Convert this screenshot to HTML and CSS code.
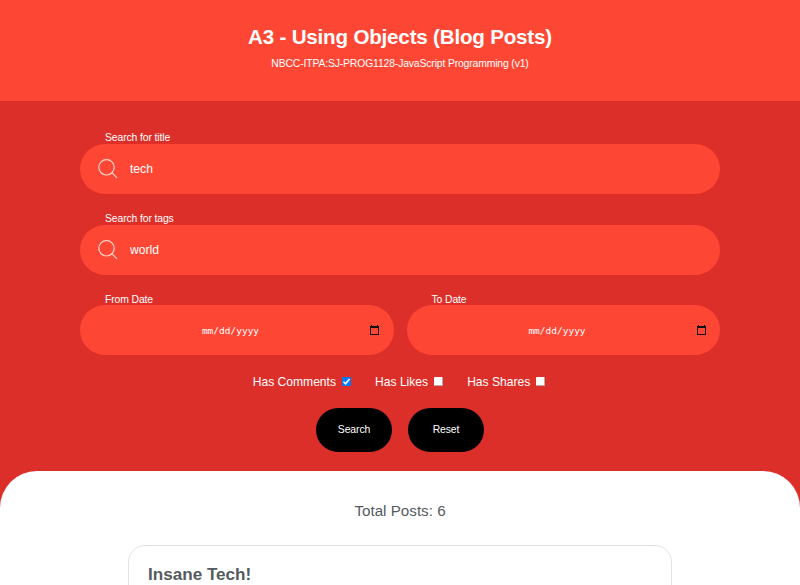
FILE: index.html
```html
<!DOCTYPE html>
<html lang="en">
<head>
<meta charset="utf-8">
<title>A3 - Using Objects (Blog Posts)</title>
<link rel="stylesheet" href="styles.css">
</head>
<body>
<header class="header">
  <h1>A3 - Using Objects (Blog Posts)</h1>
  <p>NBCC-ITPA:SJ-PROG1128-JavaScript Programming (v1)</p>
</header>
<form class="search">
  <div class="field">
    <label for="title">Search for title</label>
    <div class="pill">
      <svg class="glass" viewBox="0 0 20 20"><circle cx="8.5" cy="8.3" r="7.7"/><path d="M13.9 13.7 19 18.8"/></svg>
      <input id="title" type="text" value="tech">
    </div>
  </div>
  <div class="field">
    <label for="tags">Search for tags</label>
    <div class="pill">
      <svg class="glass" viewBox="0 0 20 20"><circle cx="8.5" cy="8.3" r="7.7"/><path d="M13.9 13.7 19 18.8"/></svg>
      <input id="tags" type="text" value="world">
    </div>
  </div>
  <div class="dates">
    <div class="field">
      <label>From Date</label>
      <div class="pill date"><span>mm/dd/yyyy</span>
        <svg class="calendar" viewBox="0 0 9 10"><path fill-rule="evenodd" d="M0 1H1V0H2V1H7V0H8V1H9V10H0ZM1 3V9H8V3Z"/></svg>
      </div>
    </div>
    <div class="field">
      <label>To Date</label>
      <div class="pill date"><span>mm/dd/yyyy</span>
        <svg class="calendar" viewBox="0 0 9 10"><path fill-rule="evenodd" d="M0 1H1V0H2V1H7V0H8V1H9V10H0ZM1 3V9H8V3Z"/></svg>
      </div>
    </div>
  </div>
  <div class="checks">
    <label>Has Comments <span class="box checked"><svg viewBox="0 0 9 9"><path d="M1.5 4.8 3.6 6.8 7.5 2"/></svg></span></label>
    <label>Has Likes <span class="box"></span></label>
    <label>Has Shares <span class="box"></span></label>
  </div>
  <div class="buttons">
    <button type="button">Search</button>
    <button type="button">Reset</button>
  </div>
</form>
<main class="results">
  <p class="total">Total Posts: 6</p>
  <article class="post"><h2>Insane Tech!</h2></article>
</main>
</body>
</html>
```
FILE: styles.css
```css
* { box-sizing: border-box; }
html, body { height: 100%; }
body {
  margin: 0;
  overflow: hidden;
  display: flex;
  flex-direction: column;
  background: #dc2f2a;
  color: #fff;
  font-family: "Liberation Sans", Arial, sans-serif;
}
h1, h2, p { margin: 0; }
.header {
  flex: none;
  height: 101px;
  padding-top: 24px;
  background: #fd4734;
  text-align: center;
}
.header h1 { font-size: 20.6px; line-height: 26px; letter-spacing: -0.2px; }
.header p { margin-top: 7px; font-size: 10.4px; line-height: 14px; letter-spacing: -0.15px; }
.search { flex: none; width: 640px; height: 370px; margin: 0 auto; padding-top: 30px; }
.field { height: 80.5px; }
.field > label {
  display: block;
  height: 13px;
  padding-left: 25px;
  font-size: 10.4px;
  line-height: 14px;
  letter-spacing: -0.12px;
}
.dates .field > label { line-height: 15px; }
.pill {
  display: flex;
  align-items: center;
  height: 50.4px;
  border-radius: 25.2px;
  background: #fd4734;
}
.glass {
  flex: none;
  width: 20px;
  height: 20px;
  margin: 0 12px 0 18px;
  fill: none;
  stroke: #ffd5cf;
  stroke-width: 1.2;
}
.pill input {
  flex: 1;
  min-width: 0;
  padding: 0;
  border: 0;
  outline: 0;
  background: transparent;
  color: #fff;
  font: 12.1px "Liberation Sans", Arial, sans-serif;
}
.dates { display: grid; grid-template-columns: 1fr 1fr; gap: 13px; }
.date { padding: 0 14.5px 0 0; }
.date span {
  flex: 1;
  padding-left: 11px;
  font: 9.5px "DejaVu Sans Mono", monospace;
  text-align: center;
}
.calendar { width: 9px; height: 10px; margin-top: -1px; fill: #111; }
.checks {
  display: flex;
  justify-content: center;
  gap: 24px;
  height: 18px;
  padding-right: 2px;
  font-size: 12.1px;
  line-height: 18px;
}
.checks label { display: flex; align-items: center; gap: 6px; }
.box { width: 9px; height: 9px; border: 1px solid #b9aaa9; border-width: 0 1px 1px 0; border-radius: 1px; background: #fff; }
.checked { border: 0; background: #0878f8; }
.checked svg { display: block; width: 9px; height: 9px; fill: none; stroke: #fff; stroke-width: 1.5; }
.buttons { display: flex; justify-content: center; gap: 16px; margin-top: 17px; }
button {
  width: 76px;
  height: 44px;
  padding: 0;
  border: 0;
  border-radius: 22px;
  background: #000;
  color: #fff;
  font: 10.4px "Liberation Sans", Arial, sans-serif;
  letter-spacing: -0.1px;
}
.results {
  flex: 1;
  min-height: 0;
  overflow: hidden;
  padding-top: 30px;
  border-radius: 37px 37px 0 0;
  background: #fff;
  color: #535b60;
}
.total { height: 20px; font-size: 15.2px; line-height: 20px; text-align: center; }
.post {
  width: 544px;
  height: 150px;
  margin: 24px auto 0;
  padding: 18px 19px;
  border: 1px solid #e2e4e4;
  border-radius: 17px;
}
.post h2 { font-size: 17.1px; line-height: 22px; }
```
